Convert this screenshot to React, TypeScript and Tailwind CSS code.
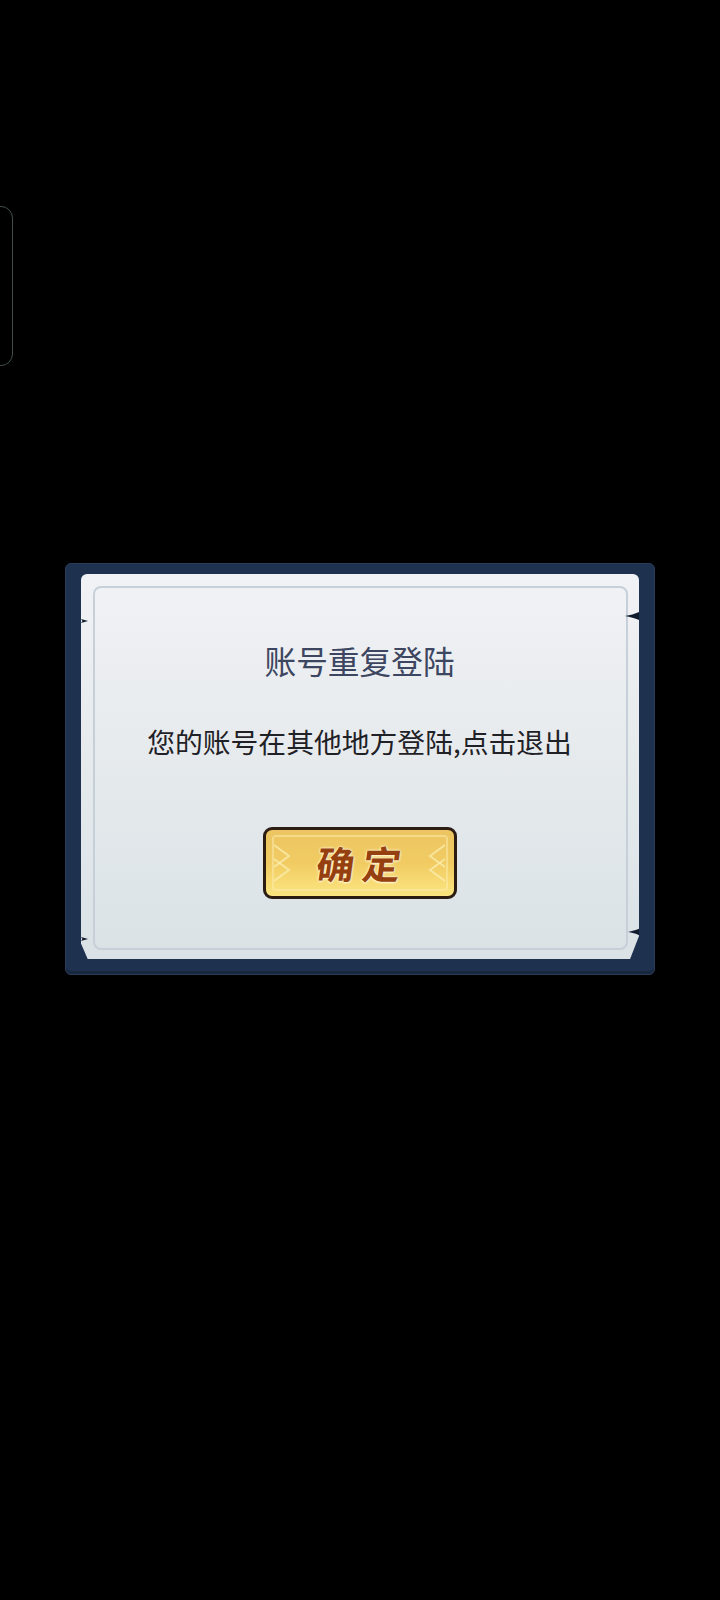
function Spike({ className, flip }: { className: string; flip?: boolean }) {
  return (
    <svg className={className} viewBox="0 0 14 8">
      <path d={flip ? "M14 4 L0 0 L3 4 L0 8 Z" : "M0 4 C5 3 10 2 14 0 L14 8 C10 6 5 5 0 4 Z"} fill="#101b2e" />
    </svg>
  )
}

function Chevrons({ className }: { className: string }) {
  return (
    <svg className={className} viewBox="0 0 18 40" fill="none" stroke="#fbeeb0" strokeWidth="2" strokeOpacity="0.75">
      <path d="M0 2 L15 13 L0 24" />
      <path d="M0 16 L15 27 L0 38" />
    </svg>
  )
}

export default function App() {
  return (
    <div className="relative h-[1600px] w-[720px] overflow-hidden bg-black pl-[65px] pt-[563px] font-['Noto_Sans_CJK_SC','Noto_Sans',sans-serif]">
      <div className="absolute left-[-20px] top-[206px] h-[160px] w-[33px] rounded-[12px] border border-[#3f5046]" />

      <div className="h-[412px] w-[590px] rounded-[6px] border border-[#2a3d58] bg-[#1e3250] px-[15px] pb-[15px] pt-[10px] shadow-[inset_0_-3px_0_#18283f]">
        <div className="relative h-[385px] w-[558px]">
          <div className="h-full w-full rounded-t-[6px] bg-gradient-to-b from-[#f1f2f5] to-[#dae2e5] pb-[9px] pl-[12px] pr-[11px] pt-[12px] [clip-path:polygon(0_0,100%_0,100%_94%,98.4%_100%,1.2%_100%,0_96%)]">
            <div className="flex h-[364px] w-[535px] flex-col items-center rounded-[8px] border-[2.5px] border-[#c7d0d9] pr-[2px]">
              <h1 className="mt-[49px] text-[31.7px] font-normal leading-[46px] text-[#3d4660]">账号重复登陆</h1>
              <p className="mt-[38px] text-[27.8px] font-normal leading-[40px] text-[#1f2126]">您的账号在其他地方登陆,点击退出</p>
              <button className="mt-[66px] flex h-[72px] w-[194px] rounded-[9px] border-[3px] border-[#2b1d12] bg-gradient-to-b from-[#ecc562] via-[#f1cb62] to-[#fce680] px-[6px] py-[5px]">
                <div className="flex flex-1 items-center justify-between rounded-[4px] border-2 border-[#fbeeb0]/50">
                  <Chevrons className="h-[40px] w-[18px]" />
                  <span className="-skew-x-[8deg] pl-[8px] text-[38px] font-bold leading-none tracking-[8px] text-[#96400f] [text-shadow:0_0_2px_#fff6d0,0_0_3px_#fff6d0,0_1px_2px_#fff6d0]">
                    确定
                  </span>
                  <Chevrons className="h-[40px] w-[18px] -scale-x-100" />
                </div>
              </button>
            </div>
          </div>
          <Spike className="absolute left-0 top-[43px] h-[8px] w-[7px]" flip />
          <Spike className="absolute right-0 top-[38px] h-[8px] w-[14px]" />
          <Spike className="absolute bottom-[16px] left-0 h-[8px] w-[7px]" flip />
          <Spike className="absolute bottom-[23px] right-0 h-[8px] w-[11px]" />
        </div>
      </div>
    </div>
  )
}
